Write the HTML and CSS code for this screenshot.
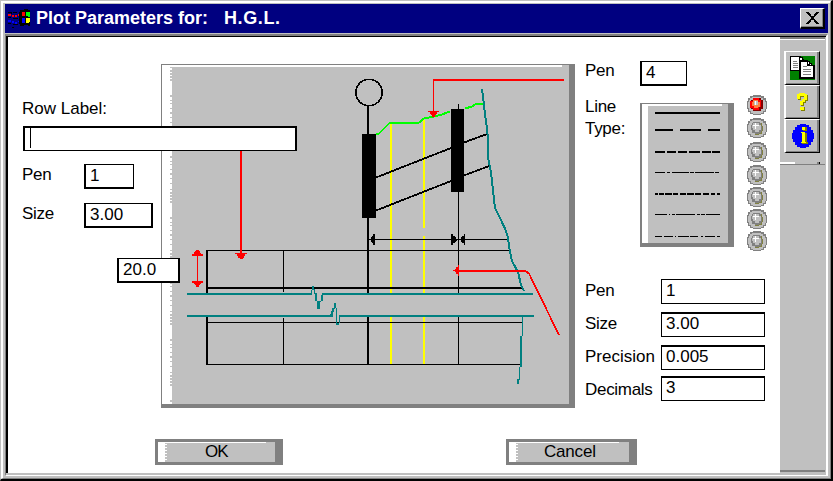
FILE: index.html
```
<!DOCTYPE html>
<html lang="en">
<head>
<meta charset="utf-8">
<title>Plot Parameters</title>
<link rel="stylesheet" href="styles.css">
</head>
<body>
<div class="window"><div class="frame">
  <header class="titlebar">
    <svg class="app-icon" width="24" height="20" viewBox="0 0 24 20" shape-rendering="crispEdges">
      <path d="M13 1h4V0h4v1h2v16h-2v-1h-4v1h-4v-2h-1V3h1z" fill="#000"/>
      <path d="M1 3h3v1H1zM6 3h4v1H6zM1 8h3v1H1zM6 9h5v1H6zM1 14h3v1H1zM6 15h5v1H6zM5 18h2v1H5zM4 3h1v2H4z" fill="#000"/>
      <path d="M1 5h3v2H1zM5 6h2v2H5zM8 6h2v2H8zM11 5h1v2h-1zM15 3h3v4h-3z" fill="red"/>
      <path d="M1 11h3v2H1zM5 12h2v2H5zM8 13h2v2H8zM11 12h1v1h-1zM15 9h3v5h-3z" fill="#00f"/>
      <path d="M19 3h4v5h-2v-1h-2z" fill="#0f0"/><path d="M19 9h4v4h-1v1h-3z" fill="#ff0"/>
    </svg>
    <h1>Plot Parameters for:</h1><span class="subject">H.G.L.</span>
    <button class="close" aria-label="Close"><svg width="13" height="12" viewBox="0 0 13 12" shape-rendering="crispEdges"><path d="M0 0h3v1h1v1h1v2h3V2h1V1h1V0h3v1h-1v1h-1v1h-1v1H9v1H8v2h1v1h1v1h1v1h1v1h1v1h-3v-1H9v-1H8V8H5v2H4v1H3v1H0v-1h1v-1h1V9h1V8h1V7h1V5H4V4H3V3H2V2H1V1H0z"/></svg></button>
  </header>
  <div class="client">
    <main>
      <section class="row-settings">
        <label class="heading" for="row">Row Label:</label>
        <div class="field row-field" id="row"><i class="caret"></i></div>
        <div class="line pen-line"><span class="label">Pen</span><div class="field thin-right">1</div></div>
        <div class="line size-line"><span class="label">Size</span><div class="field">3.00</div></div>
        <div class="field height-field">20.0</div>
      </section>

      <svg class="diagram" width="414" height="344" viewBox="161 64 414 344" shape-rendering="crispEdges" fill="none">
        <path d="M161 64h414v344H161z" fill="#808080"/>
        <path d="M162 65h407v339H162z" fill="#c0c0c0"/>
        <path d="M162 65h400v2H172v337h-10z" fill="#fff"/>
        <path d="M171 67v337" stroke="#c0c0c0" stroke-width="2" stroke-dasharray="1 2 2 1 2 1 2 1 2 14 2 3 1 2 1 4 1 3 2 3 1 4 1 5"/>
        <g fill="#ff0"><path d="M390 122h2v171h-2zM390 317h2v47h-2zM423 120h2v108h-2zM423 236h2v57h-2zM423 317h2v47h-2z"/></g>
        <g fill="#000">
          <path d="M367 106h2v187h-2zM367 317h2v48h-2zM362 134h14v84h-14zM451 109h13v83h-13zM458 104h1v189h-1zM458 317h1v48h-1z"/>
          <path d="M206 250h303v1H206zM206 287h316v2H206zM206 250h2v43h-2zM283 250h1v42h-1zM206 317h2v48h-2zM283 318h1v47h-1zM206 322h316v1H206zM206 364h314v1H206zM368 239h140v1H368z"/>
          <path d="M370 239h1v-2h1v-1h1v-2h2v11h-2v-2h-1v-1h-1v-2h-1zM457 239h-1v-2h-1v-1h-2v-2h-2v11h2v-2h2v-1h1v-1h1zM460 239h1v-2h1v-1h2v-2h1v11h-1v-2h-2v-1h-1v-2h-1z"/>
        </g>
        <circle cx="369" cy="92.500" r="13.200" stroke="#000" stroke-width="1.500"/>
        <path d="M376 177.500L451 148M464 142.500L487 134M376 210.500L451 181M464 175.500L489 166" stroke="#000" stroke-width="1.800"/>
        <path d="M376 133.500h3l3-3 8-8h29l5-4 10-2 8-2 8-3M465 108.500l7-2 3-2 9-1" stroke="#0f0" stroke-width="2"/>
        <path d="M482 89l1 8 2 17 2 15 1 9v20l3 14 2 18 2 18 6 12 5 11 2 7 2 14 2 9 6 11 3 13 3 6" stroke="#008080" stroke-width="2"/>
        <path fill="#008080" d="M522 317h1v19h-1zM520 336h2v31h-2zM519 367h1v13h-1zM517 379h2v5h-2zM187 293h124v2H187zM322 293h211v2H322zM187 315h143v2H187zM340 315h194v2H340zM311 290h1v5h-1zM312 286h2v4h-2zM314 289h1v5h-1zM315 293h2v8h-2zM317 301h3v8h-3zM320 301h1v-6h1v-2h1v8h-2v1h-1zM330 314h1v-3h1v-3h2v-5h2v5h1v15h2v-8h1v8h-1v2h-3v-17h-1v1h-1v3h-1v5h-3z"/>
        <g fill="red">
          <path d="M433 79h131v2H434v31h-1zM428 111h11v1h-2v2h-1v1h-1v2h-3v-2h-1v-1h-1v-2h-2z"/>
          <path d="M240 151h2v102h5v1h-2v2h-1v2h-1v1h-3v-1h-2v-2h-1v-2h-2v-1h5z"/>
          <path d="M197 255h1v27h-1zM196 250h3v1h1v2h1v1h2v2h-11v-2h2v-2h1v-1h1zM192 281h11v2h-2v1h-1v1h-1v2h-3v-2h-1v-1h-1v-1h-2z"/>
          <path d="M453 270h2v-1h1v-2h2v-2h1v5h67v2h-67v4h-1v-2h-2v-2h-1v-1h-2z"/>
        </g>
        <path d="M526 271.500l3 2L559 335" stroke="red" stroke-width="1.700"/>
      </svg>

      <section class="line-settings">
        <div class="line"><span class="label">Pen</span><div class="field thin-right pen-value">4</div></div>
        <div class="line-type">
          <span class="label type-label">Line<br>Type:</span>
          <svg class="swatches" width="94" height="144" viewBox="640 103 94 144" shape-rendering="crispEdges">
            <path d="M640 103h94v144h-94z" fill="#808080"/><path d="M642 104h86v139h-86z" fill="#c0c0c0"/><path d="M642 104h80v2h-74v137h-6z" fill="#fff"/>
            <path d="M655 112h65v2h-65z"/>
            <path d="M655 129h18v2h-18zM680 129h21v2h-21zM708 129h12v2h-12z"/>
            <path d="M655 151h10v2h-10zM667 151h9v2h-9zM678 151h9v2h-9zM689 151h11v2h-11zM702 151h9v2h-9zM712 151h8v2h-8z"/>
            <path d="M655 172h10v1h-10zM667 172h3v1h-3zM672 172h17v1h-17zM690 172h4v1h-4zM695 172h19v1h-19zM715 172h4v1h-4z"/>
            <path d="M655 193h3v2h-3zM659 193h5v2h-5zM665 193h7v2h-7zM673 193h5v2h-5zM680 193h6v2h-6zM687 193h7v2h-7zM695 193h6v2h-6zM703 193h6v2h-6zM711 193h4v2h-4zM717 193h3v2h-3z"/>
            <path d="M655 214h12v1h-12zM669 214h1v1h-1zM672 214h3v1h-3zM676 214h19v1h-19zM697 214h3v1h-3zM701 214h4v1h-4zM706 214h14v1h-14z"/>
            <path d="M655 236h7v1h-7zM664 236h9v1h-9zM675 236h1v1h-1zM678 236h11v1h-11zM690 236h8v1h-8zM701 236h2v1h-2zM705 236h10v1h-10zM717 236h3v1h-3z"/>
          </svg>
          <svg class="leds" width="20" height="157" viewBox="0 0 20 157" shape-rendering="crispEdges">
            <defs>
              <g id="ring"><path fill="#808080" d="M6 0h8v1h3v2h2v3h1v8h-1v3h-2v2h-3v1H6v-1H3v-2H1v-3H0V6h1V3h2V1h3z"/><path fill="#c0c0c0" d="M5 2h9v1h2v2h2v2h1v7h-1v2h-2v2h-2v1H6v-1H4v-2H2v-3H1V7h1V5h1V3h2z"/></g>
              <g id="off"><use href="#ring"/><path fill="#808080" d="M6 4h7v1h2v3h1v5h-2v3H8v-1H5v-3H4V7h1V5h1z"/><path fill="#808040" d="M14 5h1v3h1v5h-1v3h-3v1H8v-1h4v-1h2v-2h1V8h-1z"/><path fill="#c0c0c0" d="M6 5h6v2h2v5h-2v2H8v-2H6v-2H5V7h1z"/><path fill="#fff" d="M8 5h1v2h3v1H9v3H8V8H6V7h2z"/></g>
            </defs>
            <use href="#ring"/><path fill="#800000" d="M6 3h8v2h2v9h-2v2H6v-2H4V5h2z"/><path fill="red" d="M6 3h6v2h2v7h-2v3H6v-2H3V6h3z"/><path fill="#ff8040" d="M6 5h5v2h2v5h-2v1H7v-2H5V7h1z"/><path fill="#c0c0c0" d="M7 6h4v4H7z"/><path fill="#fff" d="M8 6h1v4H8z"/>
            <use href="#off" y="23"/><use href="#off" y="47"/><use href="#off" y="70"/><use href="#off" y="92"/><use href="#off" y="114"/><use href="#off" y="136"/>
          </svg>
        </div>
        <div class="values">
          <span class="label">Pen</span><div class="field">1</div>
          <span class="label">Size</span><div class="field heavy">3.00</div>
          <span class="label wide">Precision</span><div class="field heavy">0.005</div>
          <span class="label">Decimals</span><div class="field heavy last">3</div>
        </div>
      </section>

      <footer>
        <button class="push ok"><span>OK</span></button>
        <button class="push cancel"><span>Cancel</span></button>
      </footer>
    </main>

    <aside class="toolbar">
      <button class="tool" aria-label="Copy"><svg width="25" height="24" viewBox="0 0 25 24" shape-rendering="crispEdges"><path fill="#008000" d="M0 0h25v24H0z"/><path d="M0 0h11v1h2v2h1v12H0z"/><path fill="#fff" d="M1 1h8v4h1v9H1zM10 2h2v2h-2z"/><path fill="#808080" d="M3 5h4v1H3zM3 7h5v1H3zM3 9h5v1H3zM3 11h5v1H3z"/><path d="M9 4h9v1h2v2h2v2h3v14H9z"/><path fill="#fff" d="M11 6h6v4h6v11H11zM18 6h1v2h-1zM20 8h1v1h-1z"/><path fill="#808080" d="M13 10h4v1h-4zM13 13h8v1h-8zM13 15h8v1h-8zM13 18h8v1h-8z"/></svg></button>
      <button class="tool" aria-label="Help"><svg width="13" height="18" viewBox="0 0 13 18" shape-rendering="crispEdges"><path fill="#808000" d="M3 1h7v1h2v6h-2v2H8v3H5V9h2V7h2V4H5v3H2V2h1zM5 14h4v4H5z"/><path fill="#ff0" d="M3 0h6v1h2v6H9v2H7v3H4V8h2V6h2V3H4v3H1V1h2zM4 14h4v3H4z"/></svg></button>
      <button class="tool" aria-label="Information"><svg width="22" height="24" viewBox="0 0 22 24" shape-rendering="crispEdges"><path fill="#00f" d="M8 0h6v1h3v2h2v3h2v3h1v6h-1v3h-2v3h-2v2h-3v1H8v-1H5v-2H3v-3H1v-3H0V9h1V6h2V3h2V1h3z"/><path fill="#808000" d="M11 3h4v4h-4zM10 9h5v9h1v2h-6z"/><path fill="#ff0" d="M10 3h3v3h-3zM9 8h4v10h1v1H9v-1h1V9H9z"/></svg></button>
      <div class="toolbar-end"></div>
    </aside>
  </div>
</div></div>
</body>
</html>
```
FILE: styles.css
```
* { box-sizing: border-box; }
body { margin: 0; width: 833px; height: 481px; overflow: hidden; color: #000; font: 17px/21px "Liberation Sans", Arial, sans-serif; }
button { margin: 0; padding: 0; border-radius: 0; font: inherit; color: inherit; }
svg { display: block; flex: none; }

.window { width: 833px; height: 481px; border: solid #c0c0c0; border-width: 1px 2px 2px 1px; border-right-color: #000; border-bottom-color: #000; }
.frame { height: 478px; padding: 1px 2px 2px; border: solid #fff; border-width: 2px 1px 1px 2px; border-right-color: #808080; border-bottom-color: #808080; background: #c0c0c0; }

.titlebar { display: flex; align-items: center; height: 29px; padding: 0 3px 0 2px; background: #000080; color: #fff; font-size: 18px; font-weight: bold; white-space: nowrap; }
.titlebar h1 { width: 188px; margin: 0 0 0 5px; font-size: inherit; }
.subject { letter-spacing: .6px; }
.app-icon { margin-top: 1px; }
.close { display: grid; place-items: center; width: 25px; height: 21px; margin-left: auto; background: #c0c0c0; border: 1px solid #fff; border-right: 2px solid #000; border-bottom: 2px solid #000; box-shadow: inset -1px -1px #808080; }

.client { display: flex; height: 442px; margin-top: 1px; border: solid #808080; border-width: 2px 2px 1px 1px; border-right-color: #fff; border-bottom-color: #fff; background: #c0c0c0; }
main { display: grid; grid-template: 371px 65px / 153px 414px 205px; width: 774px; height: 437px; border: solid #000; border-width: 1px 0 0 2px; background: #fff; }

.label { letter-spacing: -.3px; }
.label.wide { letter-spacing: 0; }
.line { display: flex; }
.field { position: relative; z-index: 1; height: 25px; padding-left: 4px; border: solid #000; border-width: 1px 2px 2px; background: #fff; line-height: 22px; }
.thin-right { border-right-width: 1px; }

.row-settings { padding: 61px 0 0 14px; white-space: nowrap; }
.heading { display: block; height: 28px; }
.row-field { width: 274px; margin-left: 1px; border-width: 2px 2px 1px; }
.caret { display: block; width: 1px; height: 20px; margin-left: 1px; background: #000; }
.pen-line { margin-top: 13px; }
.size-line { margin-top: 14px; }
.row-settings .label { width: 62px; }
.pen-line .field { width: 50px; }
.size-line .field { width: 69px; }
.height-field { width: 63px; margin: 30px 0 0 95px; }

.diagram { margin-top: 27px; }

.line-settings { padding: 24px 0 0 10px; }
.line-settings .line { height: 25px; }
.line-settings .line .label { width: 55px; line-height: 20px; }
.pen-value { width: 47px; }
.line-type { display: flex; height: 161px; }
.type-label { width: 55px; padding-top: 10px; line-height: 22px; }
.swatches { margin-top: 17px; }
.leds { margin: 9px 0 0 13px; }
.values { display: grid; grid-template-columns: 76px 104px; row-gap: 8px; margin-top: 32px; line-height: 24px; }
.values .label { height: 25px; }
.values .field { border-width: 1px; line-height: 22px; }
.values .heavy { border-width: 2px 1px 1px; line-height: 20px; }
.values .last { margin-top: -2px; }

footer { grid-column: 1 / -1; display: flex; padding: 31px 0 0 147px; }
.push { height: 26px; padding: 0; border: 3px solid #808080; border-right-width: 8px; background: linear-gradient(90deg, transparent 92%, #c0c0c0 92%) top / 100% 1px no-repeat, linear-gradient(#fff 0 0) top / 100% 1px no-repeat, linear-gradient(90deg, #fff 7px, transparent 7px), repeating-linear-gradient(#c0c0c0 0 2px, #fff 2px 3px) 7px 0 / 2px 100% no-repeat, #c0c0c0; line-height: 20px; text-align: left; }
.ok { width: 128px; padding-left: 47px; }
.cancel { width: 131px; margin-left: 223px; padding-left: 35px; }
.push span { display: block; letter-spacing: -.2px; }
.ok span { letter-spacing: -1px; }

.toolbar { width: 46px; height: 437px; padding-top: 14px; background: linear-gradient(#808080 0 0) 0 0 / 45px 2px no-repeat, linear-gradient(#fff 0 0) 0 2px / 45px 1px no-repeat, linear-gradient(#808080 0 0) 0 433px / 45px 2px no-repeat, #c0c0c0; border-top: 1px solid #000; }
.tool { display: grid; place-items: center; width: 36px; height: 34px; margin-left: 4px; background: #c0c0c0; border: solid #fff; border-width: 1px 1px 1px 2px; border-right-color: #000; border-bottom-color: #000; box-shadow: inset -2px -1px #808080; }
.toolbar-end { width: 45px; height: 3px; margin-top: 9px; border-bottom: 1px solid #808080; background: linear-gradient(90deg, #fff 15px, transparent 15px 37px, #808080 37px 39px, #000 39px 40px, transparent 40px); }
```
